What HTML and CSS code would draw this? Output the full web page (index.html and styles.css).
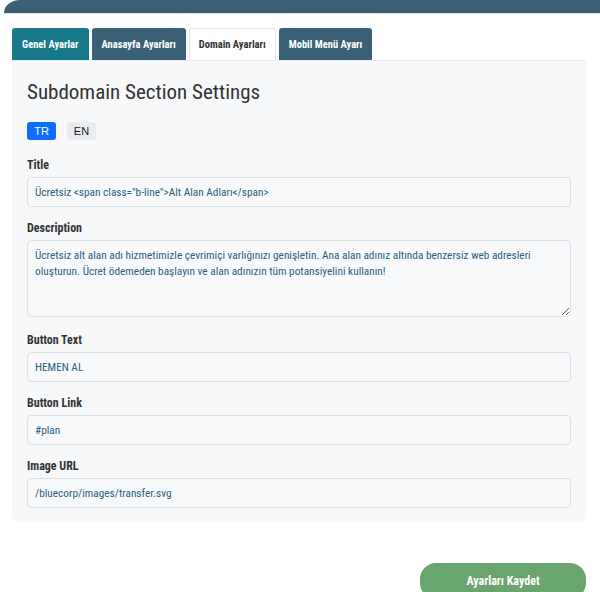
FILE: index.html
```html
<!DOCTYPE html>
<html lang="tr">
<head>
<meta charset="UTF-8">
<meta name="viewport" content="width=device-width, initial-scale=1.0">
<title>Domain Ayarları</title>
<link rel="stylesheet" href="styles.css">
</head>
<body>
    <div class="topbar"></div>

    <div class="container">
        <div class="tabs">
            <button class="tab tab-general">Genel Ayarlar</button>
            <button class="tab">Anasayfa Ayarları</button>
            <button class="tab active">Domain Ayarları</button>
            <button class="tab">Mobil Menü Ayarı</button>
        </div>

        <div class="panel">
            <h2>Subdomain Section Settings</h2>

            <div class="langs">
                <button class="lang active">TR</button>
                <button class="lang">EN</button>
            </div>

            <div class="field">
                <label>Title</label>
                <input type="text" value='Ücretsiz <span class="b-line">Alt Alan Adları</span>'>
            </div>

            <div class="field field-area">
                <label>Description</label>
                <textarea rows="4">Ücretsiz alt alan adı hizmetimizle çevrimiçi varlığınızı genişletin. Ana alan adınız altında benzersiz web adresleri oluşturun. Ücret ödemeden başlayın ve alan adınızın tüm potansiyelini kullanın!</textarea>
            </div>

            <div class="field">
                <label>Button Text</label>
                <input type="text" value="HEMEN AL">
            </div>

            <div class="field">
                <label>Button Link</label>
                <input type="text" value="#plan">
            </div>

            <div class="field">
                <label>Image URL</label>
                <input type="text" value="/bluecorp/images/transfer.svg">
            </div>
        </div>

        <div class="actions">
            <button class="save">Ayarları Kaydet</button>
        </div>
    </div>
</body>
</html>
```
FILE: styles.css
```css
/* Global styles */
body {
    font-family: "Roboto Condensed", "Liberation Sans Narrow", Lato, sans-serif;
    margin: 0;
    background-color: #fff;
    color: #333;
}
.topbar {
    height: 13px;
    margin-left: 4px;
    background-color: #3a6078;
    border-top-left-radius: 16px 13px;
    box-shadow: 0 1px 0 #dfe6ea;
}
.container {
    margin: 15px 14px 0 12px;
}

/* Tabs */
.tabs {
    display: flex;
    gap: 3px;
}
.tabs .tab {
    height: 32px;
    padding: 0 9px;
    border: 1px solid transparent;
    border-bottom: none;
    border-radius: 3px 3px 0 0;
    background-color: #3a6078;
    color: #fff;
    font-family: inherit;
    font-size: 10.5px;
    font-weight: bold;
    cursor: pointer;
}
.tabs .tab-general {
    background-color: #17798a;
}
.tabs .tab.active {
    background-color: #fff;
    border-color: #e3e6e9;
    color: #333;
}

/* Settings panel */
.panel {
    background-color: #f6f8fa;
    border-top: 1px solid #e9ecef;
    border-radius: 0 0 8px 8px;
    padding: 19px 15px 14px;
}
.panel h2 {
    margin: 0 0 18px;
    font-size: 21px;
    font-weight: normal;
    color: #333;
}
.langs {
    display: flex;
    gap: 11px;
    margin-bottom: 18px;
}
.lang {
    width: 29px;
    height: 18px;
    padding: 0;
    border: none;
    border-radius: 3px;
    background-color: #e9ecef;
    color: #222;
    font-family: "Liberation Sans", Arial, sans-serif;
    font-size: 11px;
    cursor: pointer;
}
.lang.active {
    background-color: #0d6efd;
    color: #fff;
}
.field {
    margin-bottom: 14px;
}
.field-area {
    margin-bottom: 16px;
}
.field:last-child {
    margin-bottom: 0;
}
.field label {
    display: block;
    margin-bottom: 5px;
    font-size: 12px;
    font-weight: bold;
    color: #333;
}
.field input,
.field textarea {
    display: block;
    box-sizing: border-box;
    width: 100%;
    padding: 0 7px;
    border: 1px solid #dde1e5;
    border-radius: 4px;
    background-color: #f7f9fa;
    color: #2d5f7e;
    font-family: inherit;
    font-size: 11.3px;
}
.field input {
    height: 30px;
}
.field textarea {
    height: 77px;
    padding-top: 7px;
    line-height: 16px;
    resize: vertical;
}

/* Save button */
.actions {
    display: flex;
    justify-content: flex-end;
    margin-top: 41px;
}
.save {
    width: 166px;
    height: 36px;
    border: none;
    border-radius: 16px;
    background-color: #69a56c;
    color: #fff;
    font-family: inherit;
    font-size: 12px;
    font-weight: bold;
    cursor: pointer;
}
```
